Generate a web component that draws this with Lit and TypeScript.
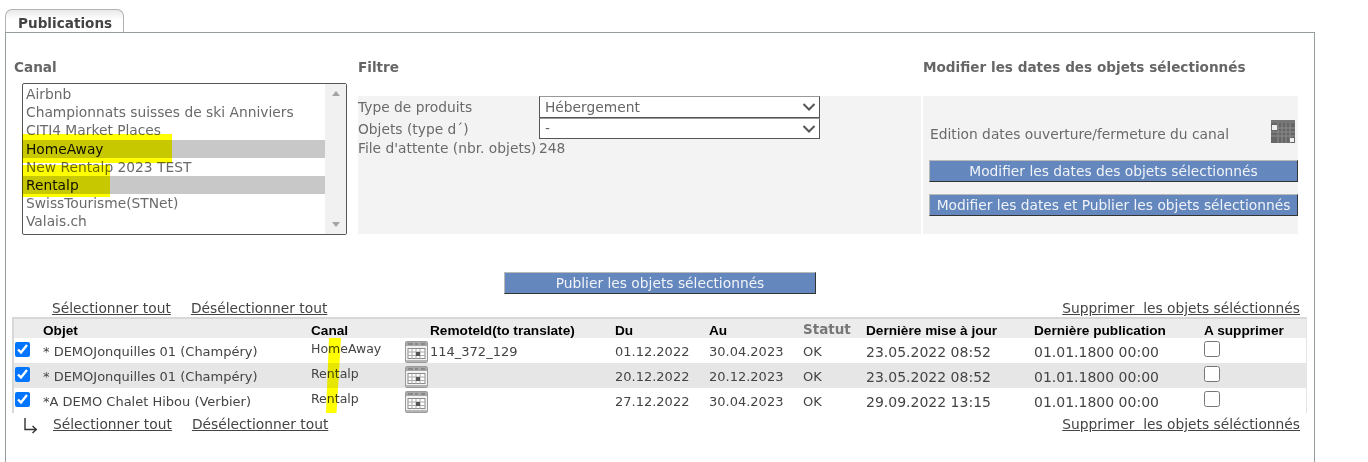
import { LitElement, html, css, svg } from "lit";
import { customElement } from "lit/decorators.js";

const channels = [
  ["Airbnb", false],
  ["Championnats suisses de ski Anniviers", false],
  ["CITI4 Market Places", false],
  ["HomeAway", true],
  ["New Rentalp 2023 TEST", false],
  ["Rentalp", true],
  ["SwissTourisme(STNet)", false],
  ["Valais.ch", false],
] as const;

const rows = [
  { o: "* DEMOJonquilles 01 (Champéry)", c: "HomeAway", r: "114_372_129", d: "01.12.2022", a: "30.04.2023", m: "23.05.2022 08:52" },
  { o: "* DEMOJonquilles 01 (Champéry)", c: "Rentalp", r: "", d: "20.12.2022", a: "20.12.2023", m: "23.05.2022 08:52" },
  { o: "*A DEMO Chalet Hibou (Verbier)", c: "Rentalp", r: "", d: "27.12.2022", a: "30.04.2023", m: "29.09.2022 13:15" },
];

const calendar = svg`<svg width="23" height="22" viewBox="0 0 23 22" class="cal">
  <rect x="0.5" y="0.5" width="22" height="21" rx="1" fill="#f2f2f2" stroke="#9a9a9a"/>
  <rect x="1" y="1" width="21" height="4" fill="#a8a8a8"/>
  <path d="M3 3h5M10 3h3M16 3h4" stroke="#6a6a6a" stroke-width="1"/>
  <rect x="3" y="7.5" width="17" height="10" fill="#fff" stroke="#8a8a8a"/>
  <path d="M7 8v10M11 8v10M15 8v10M3 11h17M3 14.5h17" stroke="#aaa"/>
  <rect x="11" y="11" width="4" height="4" fill="#555"/>
  <rect x="1" y="19" width="21" height="2" fill="#b5b5b5"/>
</svg>`;

const darkCalendar = svg`<svg width="24" height="23" viewBox="0 0 24 23">
  <rect width="24" height="23" fill="#666"/>
  <rect y="0" width="24" height="3" fill="#777"/>
  <path d="M7 3v20M11 3v20M15 3v20M19 3v20M0 8h24M0 12h24M0 16h24" stroke="#8c8c8c"/>
  <rect x="1" y="5" width="5" height="5" fill="#eee"/>
  <rect x="19" y="18" width="4" height="4" fill="#eee"/>
</svg>`;

const cornerArrow = svg`<svg width="16" height="16" viewBox="0 0 16 16" fill="none" stroke="#333" stroke-width="1.4">
  <path d="M2 0v11.5h11"/><path d="M9.5 8l3.8 3.5-3.8 3.5"/>
</svg>`;

const chevron = svg`<svg class="chev" width="14" height="8" viewBox="0 0 14 8" fill="none" stroke="#555" stroke-width="2">
  <path d="M1.5 1l5.5 5.5L12.5 1"/>
</svg>`;

@customElement("app-root")
export class AppRoot extends LitElement {
  static styles = css`
    :host {
      display: block;
      height: 462px;
      overflow: hidden;
      box-sizing: border-box;
      padding: 9px 0 0 5px;
      background: #fff;
      font-family: "DejaVu Sans", Verdana, sans-serif;
      font-size: 13.8px;
      color: #6a6a6a;
    }
    .tab {
      box-sizing: border-box;
      width: 119px;
      height: 23px;
      padding: 4px 0 0 12px;
      border: 1px solid #aeb4b4;
      border-bottom: 0;
      border-radius: 7px 7px 0 0;
      background: linear-gradient(#e9e9e9, #fff 45%);
      font-weight: 700;
      font-size: 13.6px;
      line-height: 18px;
      color: #444;
    }
    .panel {
      position: relative;
      box-sizing: border-box;
      width: 1310px;
      height: 440px;
      border: 1px solid #959c9c;
      padding: 25px 0 0 8px;
    }
    .top {
      display: grid;
      grid-template-columns: 344px 565px 375px;
    }
    h2 {
      margin: 0;
      height: 19px;
      font-size: 13.6px;
      line-height: 19px;
      font-weight: 700;
      color: #666;
    }
    .listbox {
      position: relative;
      box-sizing: border-box;
      width: 325px;
      height: 152px;
      margin: 6px 0 0 8px;
      border: 1px solid #555;
      border-radius: 2px;
      padding-top: 1px;
      display: flex;
      background: #fff;
    }
    .options { flex: 1; }
    .option {
      height: 18.2px;
      line-height: 18px;
      padding-left: 3px;
      white-space: nowrap;
    }
    .option.sel {
      background: #c8c8c8;
      color: #111;
    }
    .scroll {
      width: 21px;
      margin: -1px 0 0;
      background: #f1f1f1;
      position: relative;
      display: flex;
      flex-direction: column;
      justify-content: space-between;
      align-items: center;
      padding: 7px 0;
      box-sizing: border-box;
    }
    .arrow-up, .arrow-down {
      width: 0; height: 0;
      border-left: 4px solid transparent;
      border-right: 4px solid transparent;
    }
    .arrow-up { border-bottom: 5px solid #a3a3a3; }
    .arrow-down { border-top: 5px solid #a3a3a3; }
    .mark {
      position: absolute;
      background: #ffff00;
      mix-blend-mode: multiply;
    }
    .mark.a { left: -1px; top: 50px; width: 150px; height: 29px; }
    .mark.b { left: -1px; top: 81px; width: 88px; height: 32px; }
    .mark.c {
      left: 320px; top: 305px; width: 15px; height: 75px;
      clip-path: polygon(20% 0, 100% 0, 70% 100%, 0 100%);
    }
    .box {
      background: #f3f3f3;
      height: 138px;
      margin-top: 19px;
    }
    .filter {
      display: grid;
      grid-template-columns: 181px 281px;
      grid-template-rows: 22px 21px 18px;
      width: 563px;
      line-height: 22px;
    }
    .filter .low { margin-top: -1px; line-height: 20px; }
    .sel-wrap { position: relative; }
    .chev { position: absolute; right: 4px; top: 7px; pointer-events: none; }
    select {
      box-sizing: border-box;
      display: block;
      width: 281px;
      height: 100%;
      appearance: none;
      font: inherit;
      line-height: 18px;
      color: #666;
      background: #fff;
      border: 1px solid #555;
      border-top-color: #999;
      border-radius: 0;
      padding: 0 0 1px 5px;
    }
    .edit {
      display: flex;
      flex-direction: column;
      padding-left: 6px;
    }
    .edit-row {
      display: flex;
      justify-content: space-between;
      align-items: center;
      height: 23px;
      margin-top: 24px;
      padding: 0 3px 0 1px;
    }
    .edit-row span { padding-top: 4px; }
    .btn {
      box-sizing: border-box;
      display: block;
      height: 22px;
      padding: 0;
      background: #6487bd;
      color: #f0f3f8;
      border: 1px solid;
      border-color: #b9b9b9 #333 #333 #b9b9b9;
      font: inherit;
      line-height: 18px;
      text-align: center;
      white-space: nowrap;
    }
    .edit .btn { width: 369px; }
    .edit .btn.first { margin-top: 17px; }
    .edit .btn.second { margin-top: 12px; }
    .publish {
      width: 312px;
      margin: 37px 0 0 490px;
    }
    .links {
      display: flex;
      justify-content: space-between;
      align-items: center;
      width: 1286px;
      height: 20px;
      padding-left: 38px;
      box-sizing: border-box;
      color: #444;
    }
    .links.head { margin-top: 3px; padding-top: 2px; }
    .links.foot { height: 22px; padding-left: 9px; }
    .group { display: flex; gap: 20px; align-items: center; }
    .links a { text-decoration: underline; color: #444; }
    .links .corner { display: flex; margin: 3px -6px 0 0; }
    .table {
      box-sizing: border-box;
      width: 1295px;
      margin: 0 0 0 -2px;
      border-top: 2px solid #d8d8d8;
      border-left: 2px solid #d8d8d8;
      border-right: 1px solid #e4e4e4;
      color: #444;
    }
    .row {
      display: grid;
      grid-template-columns: 29px 268px 94px 25px 185px 94px 94px 63px 168px 170px 102px;
      box-sizing: border-box;
      height: 25px;
      padding-top: 2px;
      align-items: center;
      white-space: nowrap;
      font-size: 13px;
    }
    .row.head {
      height: 19px;
      padding-top: 3px;
      background: #ececec;
      color: #000;
      font: 700 13.65px "Liberation Sans", Arial, sans-serif;
    }
    .row.head .statut {
      font: 700 13.5px "DejaVu Sans", Verdana, sans-serif;
      color: #777;
      transform: translateY(-1px);
    }
    .row.alt { background: #e6e6e6; }
    .row .canal { transform: translateY(-3px); font-size: 12.5px; }
    .row .wide { font-size: 14px; }
    .cal { display: block; }
    input[type="checkbox"] {
      display: block;
      width: 15px;
      height: 15px;
      margin: 0 0 5px 1px;
    }
    .row input.del { width: 16px; height: 16px; margin: 0 0 6px 0; }
    .head-remote { grid-column: 4 / span 2; padding-left: 25px; }
  `;

  render() {
    return html`
      <div class="tab">Publications</div>
      <div class="panel">
        <div class="top">
          <div>
            <h2>Canal</h2>
            <div class="listbox">
              <div class="options">
                ${channels.map(([n, s]) => html`<div class="option ${s ? "sel" : ""}">${n}</div>`)}
              </div>
              <div class="scroll"><span class="arrow-up"></span><span class="arrow-down"></span></div>
              <div class="mark a"></div>
              <div class="mark b"></div>
            </div>
          </div>
          <div>
            <h2>Filtre</h2>
            <div class="box filter">
              <div>Type de produits</div>
              <div class="sel-wrap"><select><option>Hébergement</option></select>${chevron}</div>
              <div>Objets (type d´)</div>
              <div class="sel-wrap"><select><option>-</option></select>${chevron}</div>
              <div class="low">File d'attente (nbr. objets)</div>
              <div class="low">248</div>
            </div>
          </div>
          <div>
            <h2>Modifier les dates des objets sélectionnés</h2>
            <div class="box edit">
              <div class="edit-row"><span>Edition dates ouverture/fermeture du canal</span>${darkCalendar}</div>
              <button class="btn first">Modifier les dates des objets sélectionnés</button>
              <button class="btn second">Modifier les dates et Publier les objets sélectionnés</button>
            </div>
          </div>
        </div>
        <button class="btn publish">Publier les objets sélectionnés</button>
        <div class="links head">
          <div class="group"><a>Sélectionner tout</a><a>Désélectionner tout</a></div>
          <a>Supprimer&nbsp; les objets séléctionnés</a>
        </div>
        <div class="table">
          <div class="row head">
            <span></span><span>Objet</span><span>Canal</span>
            <span class="head-remote">RemoteId(to translate)</span>
            <span>Du</span><span>Au</span><span class="statut">Statut</span>
            <span>Dernière mise à jour</span><span>Dernière publication</span><span>A supprimer</span>
          </div>
          ${rows.map(
            (r, i) => html`
              <div class="row ${i === 1 ? "alt" : ""}">
                <input type="checkbox" checked />
                <span>${r.o}</span>
                <span class="canal">${r.c}</span>
                ${calendar}
                <span>${r.r}</span>
                <span>${r.d}</span><span>${r.a}</span><span>OK</span>
                <span class="wide">${r.m}</span><span class="wide">01.01.1800 00:00</span>
                <input class="del" type="checkbox" />
              </div>
            `
          )}
        </div>
        <div class="links foot">
          <div class="group">
            <span class="corner">${cornerArrow}</span>
            <a>Sélectionner tout</a><a>Désélectionner tout</a>
          </div>
          <a>Supprimer&nbsp; les objets séléctionnés</a>
        </div>
        <div class="mark c"></div>
      </div>
    `;
  }
}
